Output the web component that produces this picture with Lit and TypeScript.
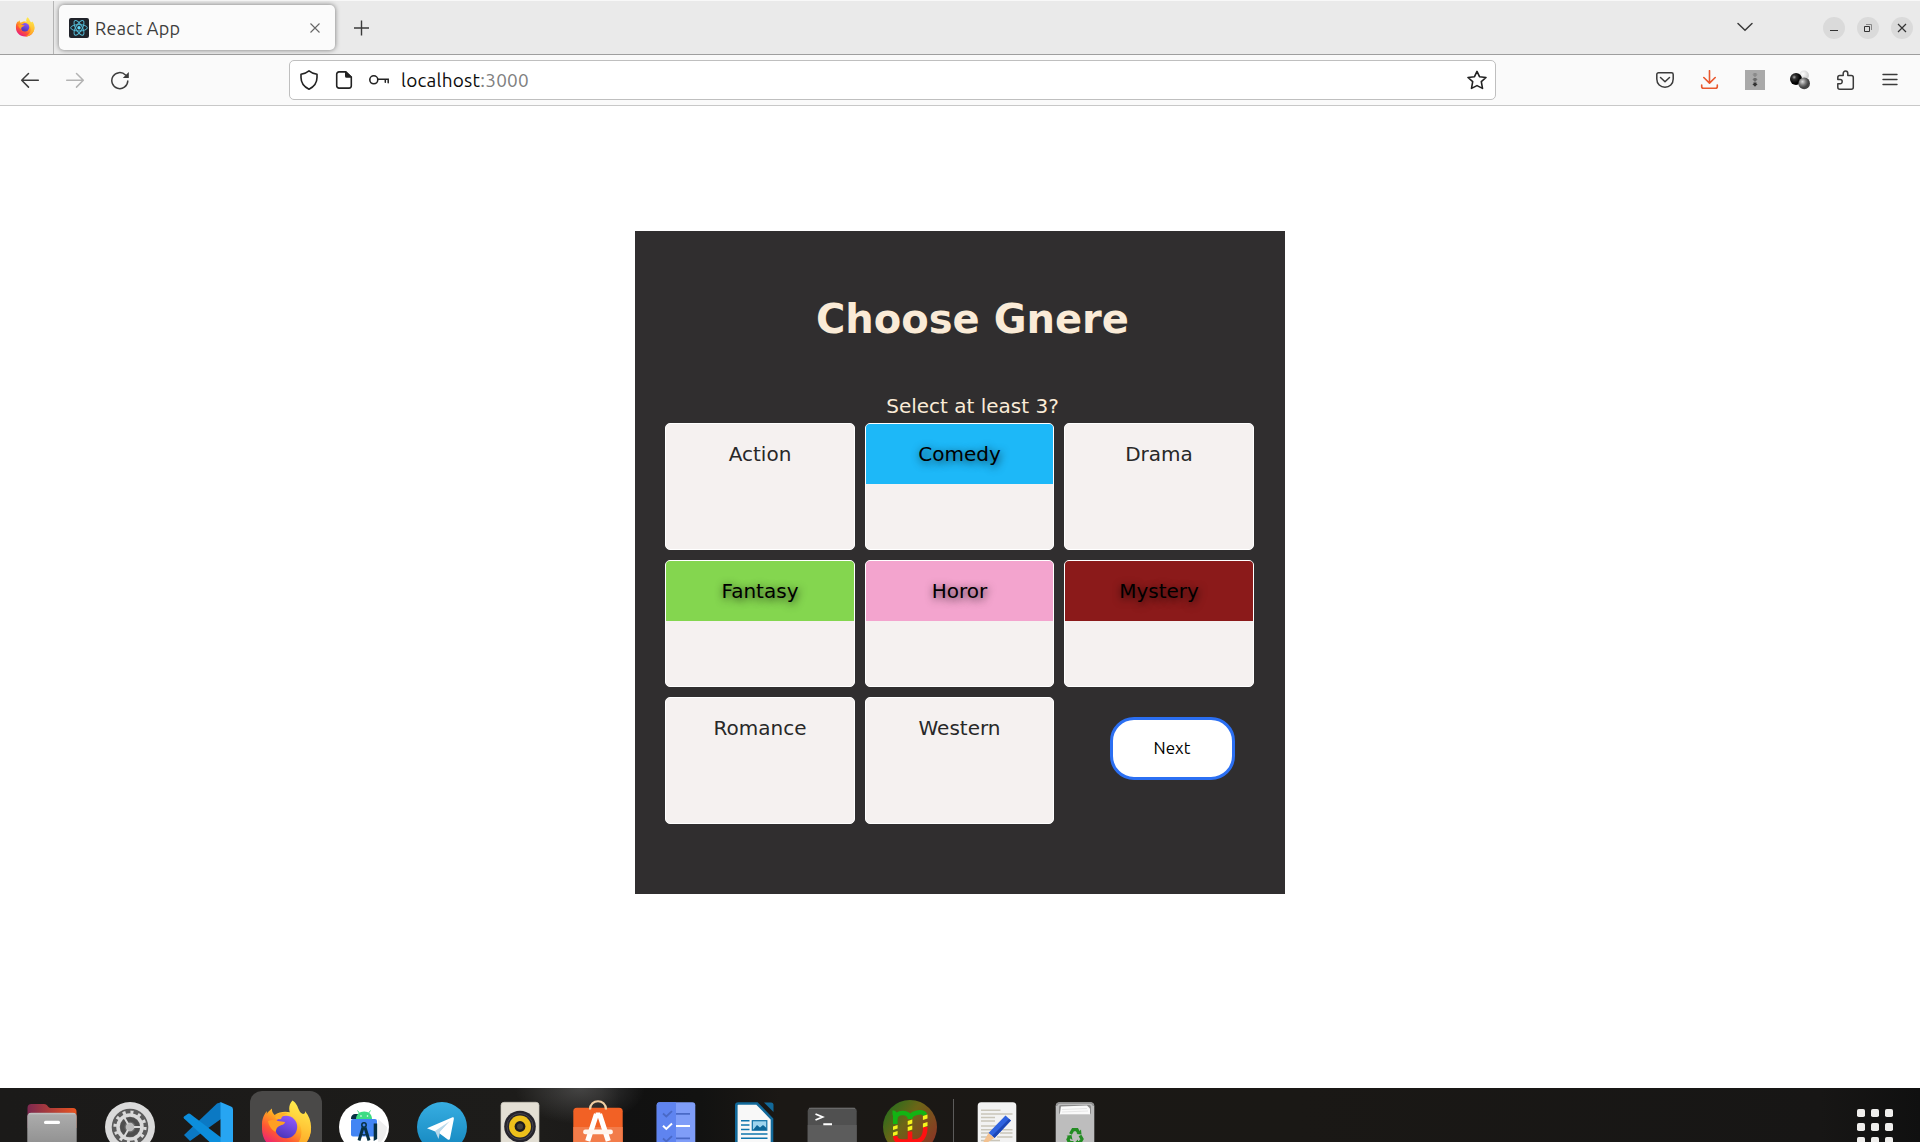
import { LitElement, html, css, svg } from "lit";
import { customElement, property } from "lit/decorators.js";
import { classMap } from "lit/directives/class-map.js";

const firefoxDefs = (id: string) => svg`
  <defs>
    <linearGradient id="${id}a" x1=".8" y1=".1" x2=".2" y2=".95">
      <stop offset="0" stop-color="#fff44f"/><stop offset=".35" stop-color="#ffa722"/>
      <stop offset=".65" stop-color="#ff5634"/><stop offset="1" stop-color="#e61587"/>
    </linearGradient>
    <linearGradient id="${id}b" x1=".7" y1="0" x2=".3" y2="1">
      <stop offset="0" stop-color="#9059ff"/><stop offset="1" stop-color="#4a35b8"/>
    </linearGradient>
    <linearGradient id="${id}c" x1=".6" y1="0" x2=".4" y2="1">
      <stop offset="0" stop-color="#fff150"/><stop offset="1" stop-color="#ff9a1e"/>
    </linearGradient>
  </defs>`;

const firefoxShape = (id: string) => svg`
  ${firefoxDefs(id)}
  <path fill="url(#${id}a)" d="M15 36c0-6 3-11 5-13l-.3 3c1.400-2.500 3.300-4 5.300-5.500-.2 3 .6 4.500 2.500 6.500 6-4 14-4 20-1 8 3 16 8 16.500 14C64 55 53 64 39 64S14.500 53 15 40z"/>
  <path fill="url(#${id}c)" d="M45.500 12.500c4 2.500 5 6 6.500 9.500 1 2.500 3.500 5 5.500 3.500.7-.6.7-1.500.500-2.500 4.500 5 6.500 12 6 18-1 14-12 23-25 23 12-5 17-14 15-24-1-5-4-8-8-11-5-4-5-12-.5-16.500z"/>
  <circle cx="39" cy="39" r="11.200" fill="url(#${id}b)"/>
  <path fill="#ff9f23" d="M21 33c4-1.500 7-1 10 0 2 .6 5 .3 7 1 0 2.500-4 3-6.500 4.500-2 1.300-2 2.500-3 5.500-4-2-7-7-7.500-11z"/>
  <path fill="#ffb02a" d="M28 30c3-5 8-6 13-5-4 1-6 3-7 6-2 .6-4 .2-6-1z"/>`;

const appIcons: Record<string, unknown> = {
  files: svg`
    <defs>
      <linearGradient id="fo" x1="0" x2="1" y1="0" y2="0"><stop offset="0" stop-color="#7c2850"/><stop offset="1" stop-color="#e95420"/></linearGradient>
      <linearGradient id="fg" x1="0" x2="0" y1="0" y2="1"><stop offset="0" stop-color="#adadad"/><stop offset="1" stop-color="#8b8b8b"/></linearGradient>
    </defs>
    <path fill="url(#fo)" d="M14.500 20a4 4 0 0 1 4-4H31c2 0 3 1 4 2.500 1 1 2 1.500 3.500 1.500H60a3.500 3.500 0 0 1 3.500 3.500V40h-49z"/>
    <rect x="14.300" y="24.800" width="49.400" height="38" rx="4" fill="url(#fg)"/>
    <path d="M16 25.800h46" stroke="#d0d0d0" stroke-width=".8"/>
    <rect x="31" y="32.700" width="16" height="3.200" rx="1.500" fill="#fff"/>`,
  settings: svg`
    <circle cx="39" cy="39" r="25" fill="#dadada"/>
    <circle cx="39" cy="39" r="18.300" fill="#5b5b5b"/>
    <circle cx="39" cy="39" r="14.900" fill="none" stroke="#dadada" stroke-width="3.400" stroke-dasharray="3 4.800"/>
    <circle cx="39" cy="39" r="12" fill="none" stroke="#dadada" stroke-width="3.500"/>
    <circle cx="39" cy="39" r="7.600" fill="#686868" stroke="#4e4e4e" stroke-width="4"/>
    <circle cx="39" cy="39" r="4.300" fill="#bdbdbd"/>
    <path stroke="#dadada" stroke-width="2" d="M43 39h8M37 42l-4 7M37 36l-4-7"/>`,
  code: svg`
    <path fill="#0b79c4" d="M15 47 48 15.500l4-1.200V31L21 53z"/>
    <path fill="#0c8edc" d="M15 30.500a1.500 1.500 0 0 1 0-2l4-2.800a2 2 0 0 1 2 .1L52 49.500v15z"/>
    <path fill="#27a5f2" d="M51.500 14 62 18.600a3 3 0 0 1 2 2.800V64H51.500z"/>`,
  firefox: firefoxShape("fd"),
  studio: svg`
    <circle cx="39" cy="39" r="25" fill="#fff"/>
    <path fill="#eee" d="m45 24 17 15c0 7-4 14-9 18V31z"/>
    <path fill="#073042" d="M26 30c0-2 2-4 4-4h5v5h-9z"/>
    <path fill="#3ddc84" d="M31 31c0-4.500 3.500-7.500 8.200-7.500S47 26.500 47 31z"/>
    <path d="m32.500 22.500 2.500 3.500M45.500 22.500 43 26" stroke="#3ddc84"/>
    <circle cx="36" cy="28" r=".8" fill="#fff"/><circle cx="42.500" cy="28" r=".8" fill="#fff"/>
    <rect x="26" y="31" width="26" height="17.500" rx="2" fill="#4285f4"/>
    <path d="M48.700 35.500h3.500V51l-3.500 2z" fill="#073042"/>
    <circle cx="39" cy="37" r="2.200" fill="none" stroke="#073042" stroke-width="1.500"/>
    <path d="m38 39.500-4 13M40 39.500l4 13" stroke="#073042" stroke-width="3"/><path d="M36 46q3 2 6 0" stroke="#073042" stroke-width="1.500" fill="none"/>`,
  telegram: svg`
    <defs><linearGradient id="tg" x1="0" x2="0" y1="0" y2="1"><stop offset="0" stop-color="#37aee2"/><stop offset="1" stop-color="#1385bd"/></linearGradient></defs>
    <circle cx="39" cy="39" r="25" fill="url(#tg)"/>
    <path fill="#fff" d="M24 40.300 49 29.500c1.300-.5 2.200 0 1.800 1.800L47 50.500c-.3 1.300-1.200 1.600-2.300 1L36 45z"/>
    <path fill="#b9d9eb" d="m32 43 15-10-10 11-1.500 7z"/><path fill="#fff" d="m37 44 10-11-2 16z"/>`,
  music: svg`
    <rect x="20" y="14.300" width="38" height="50" rx="3" fill="#e3dfd4" stroke="#c9c5bb" stroke-width=".7"/>
    <circle cx="39" cy="38.500" r="15.800" fill="#25242b"/><circle cx="39" cy="38.500" r="13" fill="none" stroke="#55525f" stroke-width=".7"/>
    <circle cx="39" cy="38.500" r="11" fill="#edc01b"/><circle cx="39" cy="38.500" r="5.400" fill="#1c1b1e"/>
    <circle cx="39" cy="38.500" r="3" fill="#42403b"/>`,
  software: svg`
    <rect x="14.300" y="19.700" width="49.400" height="40" rx="3.500" fill="#f26125"/>
    <path fill="#f27c4a" d="M14.300 39h49.400v20H14.300z"/>
    <path d="M31 21.500c0-11 16-11 16 0" fill="none" stroke="#f1cfa3" stroke-width="2.200"/>
    <path d="M36.700 26h4.600" stroke="#fff" stroke-width="3"/>
    <path d="m37.500 26-8.800 27M40.500 26l8.800 27" stroke="#fff" stroke-width="5.200"/>
    <rect x="24.200" y="41.500" width="29.600" height="4.800" rx="2" fill="#fff5ee"/>`,
  tasks: svg`
    <rect x="19.700" y="14.200" width="38.600" height="46" rx="3" fill="#7f9df8"/>
    <path d="M22.700 14.200H39V60H19.700V17.200a3 3 0 0 1 3-3z" fill="#5f84f0"/>
    <path d="m26 25.500 3.300 3 5.700-5.300M26 50.500l3.300 3 5.700-5.300M39 25.800h14M39 50.300h14" fill="none" stroke="#4a69c6" stroke-width="1.800"/>
    <path d="m26 37.700 3.300 3.200 5.700-5.400M39 38h14" fill="none" stroke="#fff" stroke-width="2"/>`,
  writer: svg`
    <path fill="#f8f8f8" stroke="#12699a" stroke-width="2.600" d="M21.300 64V17.500a2 2 0 0 1 2-2H42L57 31v33"/>
    <path fill="#12699a" d="M49 14.500h7a2.500 2.500 0 0 1 2.500 2.500v7z"/>
    <path d="M26 32.700h8.500M26 37h8.500M26 41.500h8.500M26 46h26.500M26 50.300h26.500" stroke="#0e75ad" stroke-width="1.600"/>
    <rect x="37.300" y="32.700" width="14.500" height="9.500" fill="#9fd4ee" stroke="#0e6fa5" stroke-width="1.200"/>
    <path fill="#0d6698" d="m38 42 4-5 3 2.500 3-2.500 3.500 3v2z"/>`,
  terminal: svg`
    <rect x="14.700" y="19.700" width="49" height="42" rx="3.500" fill="#505050"/>
    <path fill="#5c5c5c" d="M14.700 37h49v20h-49z"/>
    <path d="M16 20.300h46" stroke="#707070"/>
    <path d="m22.500 26 7 3-7 3M30.300 36.300H39" fill="none" stroke="#fff" stroke-width="1.900"/>`,
  mono: svg`
    <defs>
      <linearGradient id="mm" x1="0" y1="0" x2="1" y2=".8"><stop offset="0" stop-color="#13701d"/><stop offset=".45" stop-color="#6d6517"/><stop offset="1" stop-color="#8d3226"/></linearGradient>
    </defs>
    <circle cx="39" cy="39" r="27" fill="url(#mm)"/>
    <g fill="none" stroke-width="4.600">
      <path stroke="#13b313" d="M21.500 24.500c2.500 0 2.800 2 2.800 5V36M24.300 31c0-7.500 14.700-8.500 14.700 0v0M39 31c0-6.500 13-9 15.200-4"/>
      <path stroke="#f11" d="M24.300 48c0 4 3 5.500 7 5.500h11c8 0 12-4 12-14.500M39 43.500V54"/>
    </g>
    <path fill="#f5f51c" d="m22 38.500 4.600-1.500v3.600L22 42zM22 44.500l4.600-1.500v3.600L22 48zM36.700 33l4.600-1.500v4L36.700 37zM36.700 39l4.600-1.500v4L36.700 43zM51.900 28l4.600-1.500v4L51.900 32zM51.900 35.500l4.600-1.500v4l-4.600 1.500z"/>`,
  editor: svg`
    <rect x="19.700" y="14.200" width="38.600" height="46" rx="3.500" fill="#f2f2f2"/>
    <path d="M23 22.300h19.500M23 26h31.500M23 29.500h14M23 33h14M23 38h15M23 41.700h14M44 41.700h10.500M23 45h11M42 45h12.500M23 49h8M39 49h15.500M23 52.500h19" stroke="#c9c5b9" stroke-width="1.400"/>
    <path fill="#2f62df" d="m47.500 27.500 5.500 5-16.500 17.500-6-5z"/><path fill="#1d46b6" d="m51 31 2 1.500L36.500 50l-2.500-2z"/>
    <path fill="#f3c18f" d="m30.500 45 6 5-8 5-3.500-.5z"/>`,
  trash: svg`
    <rect x="19.700" y="14.200" width="38.600" height="46" rx="4" fill="#bdbdbd"/>
    <path d="M20.500 18a3.500 3.500 0 0 1 3-3h31a3.500 3.500 0 0 1 3 3" fill="none" stroke="#8e8e8e" stroke-width="1.500"/>
    <rect x="23" y="17" width="32" height="9.500" rx="2" fill="#8b8b8b"/>
    <path fill="#fafafa" d="m25 18.500 26-1 3 3v6H23.800z"/><path d="m26 21.500 25-1M26 24l26-1" stroke="#ddd" stroke-width=".7"/>
    <g fill="none" stroke="#238c23" stroke-width="3.200">
      <path d="m34.500 46 2.500-4.300h4l1.500 2.800M44 47.500l2 3.500-2 3.500h-3M37.500 54.500h-4l-1.500-3 1.500-3"/>
    </g>
    <path fill="#238c23" d="m40.500 46 5 .5-.5-5zM42 51.500v6L38.800 54.500zM30.500 47.800l5-.8 1 5z"/>`,
};

/** One launcher in the dock. */
@customElement("dock-app")
class DockApp extends LitElement {
  @property() name = "";
  @property({ type: Boolean }) active = false;

  static styles = css`
    :host { display: block; flex: none; width: 78px; height: 54px; overflow: hidden; }
    .tile { margin: 3px 3px 0; height: 72px; border-radius: 12px; }
    .tile.active { background: #4a4948; }
    .glyph { display: block; margin: 0 -3px; position: relative; top: -3px; }
  `;

  render() {
    return html`<div class=${classMap({ tile: true, active: this.active })}>
      <svg class="glyph" width="78" height="70" viewBox="0 0 78 70">${appIcons[this.name]}</svg>
    </div>`;
  }
}

/** Window chrome: tab strip and navigation toolbar. */
@customElement("browser-chrome")
class BrowserChrome extends LitElement {
  static styles = css`
    :host { display: block; flex: none; font-family: Ubuntu, "Noto Sans", sans-serif; }
    svg { display: block; flex: none; }
    .tabs {
      display: flex; align-items: flex-start; box-sizing: border-box; height: 55px;
      background: #eaeaea; border-top: 1px solid #f8f8f8; border-bottom: 1px solid #9e9e9e;
    }
    .pinned { box-sizing: border-box; width: 54px; height: 53px; padding: 16px 0 0 15px; border-right: 1px solid #b5b5b5; }
    .tab {
      display: flex; align-items: center; box-sizing: border-box; width: 276px; height: 45px;
      margin: 4px 0 0 5px; padding: 0 14px 0 10px; border-radius: 5px; background: #fbfbfb;
      box-shadow: 0 0 5px rgba(0, 0, 0, .5);
    }
    .title { flex: 1; margin-left: 6px; font-size: 18px; letter-spacing: .3px; line-height: 24px; color: #3d3d3d; }
    .plus { margin: 17px 0 0 17px; }
    .list { margin: 17px 0 0 auto; }
    .controls { display: flex; gap: 12px; margin: 16px 7px 0 68px; }
    .nav {
      display: flex; align-items: center; box-sizing: border-box; height: 51px;
      padding: 0 20px; background: #fafafa; border-bottom: 1px solid #c8c8c8;
    }
    .moves, .tools { display: flex; gap: 25px; }
    .url {
      display: flex; align-items: center; box-sizing: border-box; width: 1207px; height: 40px;
      margin: 0 159px; padding: 0 8px 0 9px; border: 1px solid #bfbfbf; border-radius: 5px; background: #fff;
    }
    .marks { display: flex; gap: 15px; }
    .address { flex: 1; margin-left: 12px; font-size: 19px; line-height: 26px; letter-spacing: .22px; color: #0c0c0c; }
    .port { color: #808080; }
  `;

  render() {
    return html`
      <div class="tabs">
        <div class="pinned"><svg width="20" height="20" viewBox="13 12 52 53">${firefoxShape("ft")}</svg></div>
        <div class="tab">
          <svg width="20" height="20" viewBox="0 0 20 20">
            <rect width="20" height="20" rx="2" fill="#20232a"/>
            <g fill="none" stroke="#53b9d4" stroke-width="1">
              <ellipse cx="10" cy="9.800" rx="8.300" ry="3.200"/>
              <ellipse cx="10" cy="9.800" rx="8.300" ry="3.200" transform="rotate(60 10 9.800)"/>
              <ellipse cx="10" cy="9.800" rx="8.300" ry="3.200" transform="rotate(120 10 9.800)"/>
            </g><circle cx="10" cy="9.800" r="1.700" fill="#61dafb"/>
          </svg>
          <span class="title">React App</span>
          <svg width="12" height="12" viewBox="0 0 12 12"><path d="m1.500 1.500 9 9m0-9-9 9" stroke="#666" stroke-width="1.100"/></svg>
        </div>
        <svg class="plus" width="20" height="20" viewBox="0 0 20 20"><path d="M9.500 2.500v15M2 10h15" stroke="#3a3a3a" stroke-width="1.400"/></svg>
        <svg class="list" width="20" height="20" viewBox="0 0 20 20"><path d="m3 5.500 7 6.700 7-6.700" fill="none" stroke="#3a3a3a" stroke-width="1.500" stroke-linecap="round"/></svg>
        <div class="controls">
          <svg width="22" height="22" viewBox="0 0 22 22"><circle cx="11" cy="11" r="11" fill="#dadada"/><path d="M7 13.500h8" stroke="#333"/></svg>
          <svg width="22" height="22" viewBox="0 0 22 22"><circle cx="11" cy="11" r="11" fill="#dadada"/><path d="M7.500 9.500h5v5h-5z" fill="none" stroke="#333"/><path d="M9 7.500h5.500V13" fill="none" stroke="#888"/></svg>
          <svg width="22" height="22" viewBox="0 0 22 22"><circle cx="11" cy="11" r="11" fill="#dadada"/><path d="m7 7 8 8m0-8-8 8" stroke="#333" stroke-width="1.200"/></svg>
        </div>
      </div>
      <div class="nav">
        <div class="moves">
          <svg width="20" height="20" viewBox="0 0 20 20"><path d="M18.300 10.300H2M8.500 3.500 1.700 10.300l6.800 6.800" fill="none" stroke="#3c3c3c" stroke-width="1.500" stroke-linecap="round" stroke-linejoin="round"/></svg>
          <svg width="20" height="20" viewBox="0 0 20 20"><path d="M1.700 10.300H18m-6.500-6.800 6.800 6.800-6.800 6.800" fill="none" stroke="#b3b3b3" stroke-width="1.500" stroke-linecap="round" stroke-linejoin="round"/></svg>
          <svg width="20" height="20" viewBox="0 0 20 20"><path d="M17.800 11A8 8 0 1 1 15.500 5" fill="none" stroke="#3c3c3c" stroke-width="1.500" stroke-linecap="round"/><path d="M18.800 2v6h-6z" fill="#3c3c3c"/></svg>
        </div>
        <div class="url">
          <div class="marks">
            <svg width="20" height="20" viewBox="0 0 20 20"><path d="M10 .9C12.500 3 15 3.700 18 4.300v3.200c0 5.500-3.500 9.500-8 11.700-4.500-2.200-8-6.200-8-11.700V4.300C5 3.700 7.500 3 10 .9z" fill="none" stroke="#222" stroke-width="1.600" stroke-linejoin="round"/></svg>
            <svg width="20" height="20" viewBox="0 0 20 20"><path d="M11.500 1.900H5A2.300 2.300 0 0 0 2.700 4.200v11.600A2.300 2.300 0 0 0 5 18.100h10a2.300 2.300 0 0 0 2.300-2.300V7z" fill="none" stroke="#222" stroke-width="1.600"/><path d="M11 1.100h1l6 6v.6h-5.500A1.500 1.500 0 0 1 11 6.200z" fill="#222"/></svg>
            <svg width="20" height="20" viewBox="0 0 20 20"><circle cx="4.800" cy="9.800" r="4" fill="none" stroke="#222" stroke-width="1.600"/><path d="M9 9.300h10.200v3.500M16.300 9.300v3" fill="none" stroke="#222" stroke-width="1.500" stroke-linecap="round"/></svg>
          </div>
          <span class="address">localhost<span class="port">:3000</span></span>
          <svg width="20" height="20" viewBox="0 0 20 20"><path d="m10 1.400 2.500 5.300 6.500.8-4.700 4.200 1.200 6.700L10 15.600l-5.500 2.800 1.200-6.700L1 7.500l6.500-.8z" fill="none" stroke="#222" stroke-width="1.600" stroke-linejoin="round"/></svg>
        </div>
        <div class="tools">
          <svg width="20" height="20" viewBox="0 0 20 20"><path d="M3.500 2.800h13A1.700 1.700 0 0 1 18.200 4.500V9c0 5-3.700 8.200-8.200 8.200S1.800 14 1.800 9V4.500A1.700 1.700 0 0 1 3.500 2.800z" fill="none" stroke="#3a3a3a" stroke-width="1.500"/><path d="m5.500 7.500 4.500 4.200 4.500-4.200" fill="none" stroke="#3a3a3a" stroke-width="1.500" stroke-linecap="round" stroke-linejoin="round"/></svg>
          <svg width="20" height="20" viewBox="0 0 20 20"><path d="M9.500.7V13M3.800 7.500l5.700 5.600 5.700-5.600M1.700 15v1.500c0 1 .8 1.800 1.800 1.800h12c1 0 1.800-.8 1.800-1.800V15" fill="none" stroke="#e9582e" stroke-width="1.600" stroke-linecap="round" stroke-linejoin="round"/></svg>
          <svg width="20" height="20" viewBox="0 0 20 20"><path fill="#a9a9a9" d="M0 0h20v20H0z"/><path fill="#8a8a8a" d="M8.500 3h3v1.500h1.200L10 7.200 7.300 4.500h1.200z"/><path fill="#6a6a6a" d="M8.500 8h3v1.300h1.200L10 12 7.300 9.300h1.200z"/><path fill="#333" d="M8.500 12.500h3V14h1.200L10 16.800 7.300 14h1.200z"/></svg>
          <svg width="20" height="20" viewBox="0 0 20 20">
            <defs>
              <radialGradient id="b1" cx=".35" cy=".35"><stop offset="0" stop-color="#aaa"/><stop offset=".35" stop-color="#333"/><stop offset="1" stop-color="#000"/></radialGradient>
              <radialGradient id="b2" cx=".35" cy=".35"><stop offset="0" stop-color="#ddd"/><stop offset=".6" stop-color="#777"/><stop offset="1" stop-color="#444"/></radialGradient>
              <radialGradient id="b3" cx=".4" cy=".35"><stop offset="0" stop-color="#fff"/><stop offset="1" stop-color="#d2d2d2"/></radialGradient>
            </defs>
            <circle cx="14" cy="5.500" r="5" fill="url(#b3)"/><circle cx="6" cy="9" r="6" fill="url(#b1)"/><circle cx="14.200" cy="13.400" r="5.800" fill="url(#b2)"/>
          </svg>
          <svg width="20" height="20" viewBox="0 0 20 20"><path d="M4.800 5.500h3.400V3.400a2.300 2.300 0 0 1 4.600 0v2.100h3.500a2 2 0 0 1 2 2v9.700a2 2 0 0 1-2 2H4.800a2 2 0 0 1-2-2v-3.400h2.300a2.100 2.100 0 0 0 0-4.200H2.800V7.500a2 2 0 0 1 2-2z" fill="none" stroke="#3a3a3a" stroke-width="1.500" stroke-linejoin="round"/></svg>
          <svg width="20" height="20" viewBox="0 0 20 20"><path d="M3 4.500h14M3 9.500h14M3 14.500h14" stroke="#3a3a3a" stroke-width="1.400" stroke-linecap="round"/></svg>
        </div>
      </div>`;
  }
}

const genres = [
  { name: "Action", tone: "" },
  { name: "Comedy", tone: "blue" },
  { name: "Drama", tone: "" },
  { name: "Fantasy", tone: "green" },
  { name: "Horor", tone: "pink" },
  { name: "Mystery", tone: "maroon" },
  { name: "Romance", tone: "" },
  { name: "Western", tone: "" },
];

/** Genre picker form. */
@customElement("genre-picker")
class GenrePicker extends LitElement {
  static styles = css`
    :host {
      display: block; box-sizing: border-box; width: 650px; height: 663px; padding: 64px 30px 0;
      background: #302e2f; color: #faebd7; font-family: "DejaVu Sans", sans-serif;
    }
    .heading { margin: 0 -25px 0 0; text-align: center; font-size: 40px; line-height: 48px; font-weight: 700; }
    .hint { margin: 51px -25px 5px 0; text-align: center; font-size: 20px; line-height: 24px; }
    .grid { display: grid; grid-template-columns: 190px 189px 190px; grid-auto-rows: 127px; gap: 10px; }
    .card {
      box-sizing: border-box; border: 1px solid #fff; border-radius: 5px; overflow: hidden;
      background: #f5f1f0; color: #282828;
    }
    .label { height: 60px; line-height: 60px; text-align: center; font-size: 20px; }
    .picked { color: #000; text-shadow: 1px 2px 8px rgba(0, 0, 0, .8); }
    .blue { background: #1db8f8; }
    .green { background: #84d64f; }
    .pink { background: #f3a4ce; }
    .maroon { background: #8b1a1a; }
    .next {
      box-sizing: border-box; width: 125px; height: 63px; margin: 20px 0 0 46px; padding: 0 1px 1px 0;
      border: 3px solid #2b6ff2; border-radius: 24px; background: #fff; color: #000;
      font: 17px/24px Ubuntu, "Noto Sans", sans-serif;
    }
  `;

  render() {
    return html`
      <h1 class="heading">Choose Gnere</h1>
      <p class="hint">Select at least 3?</p>
      <div class="grid">
        ${genres.map(
          (g) => html`<div class="card">
            <div class=${classMap({ label: true, picked: !!g.tone, ...(g.tone ? { [g.tone]: true } : {}) })}>${g.name}</div>
          </div>`
        )}
        <button class="next">Next</button>
      </div>`;
  }
}

@customElement("app-root")
class AppRoot extends LitElement {
  static styles = css`
    :host { display: flex; flex-direction: column; width: 1920px; height: 1142px; background: #fff; overflow: hidden; }
    .page { display: flex; justify-content: center; align-items: flex-start; box-sizing: border-box; height: 982px; padding-top: 125px; }
    .dock {
      display: flex; box-sizing: border-box; height: 54px; padding: 0 13px; overflow: hidden;
      background:
        radial-gradient(ellipse 65px 36px at 580px 0, rgba(110, 110, 110, .5), rgba(110, 110, 110, 0)),
        linear-gradient(90deg, #1b1a19 0, #1d1c1a 540px, #1b1a19 600px, #111 620px, #121211 700px, #1b1815 780px, #1a1815 1300px, #171615 1820px, #101010 1920px);
    }
    .sep { flex: none; width: 1px; height: 43px; margin: 11px 4px 0 4px; background: #5c5b5a; }
    .spacer { flex: 1; }
    .launcher { display: block; flex: none; }
  `;

  render() {
    const pinned = ["files", "settings", "code", "firefox", "studio", "telegram", "music", "software", "tasks", "writer", "terminal", "mono"];
    return html`
      <browser-chrome></browser-chrome>
      <div class="page"><genre-picker></genre-picker></div>
      <div class="dock">
        ${pinned.map((n) => html`<dock-app name=${n} ?active=${n === "firefox"}></dock-app>`)}
        <div class="sep"></div>
        <dock-app name="editor"></dock-app>
        <dock-app name="trash"></dock-app>
        <div class="spacer"></div>
        <svg class="launcher" width="50" height="54" viewBox="1857 0 50 54">
          ${[21, 35, 49].map((y) => [1857, 1871, 1885].map((x) => svg`<rect x=${x} y=${y} width="8" height="8" rx="1.800" fill="#efeeec"/>`))}
        </svg>
      </div>`;
  }
}
